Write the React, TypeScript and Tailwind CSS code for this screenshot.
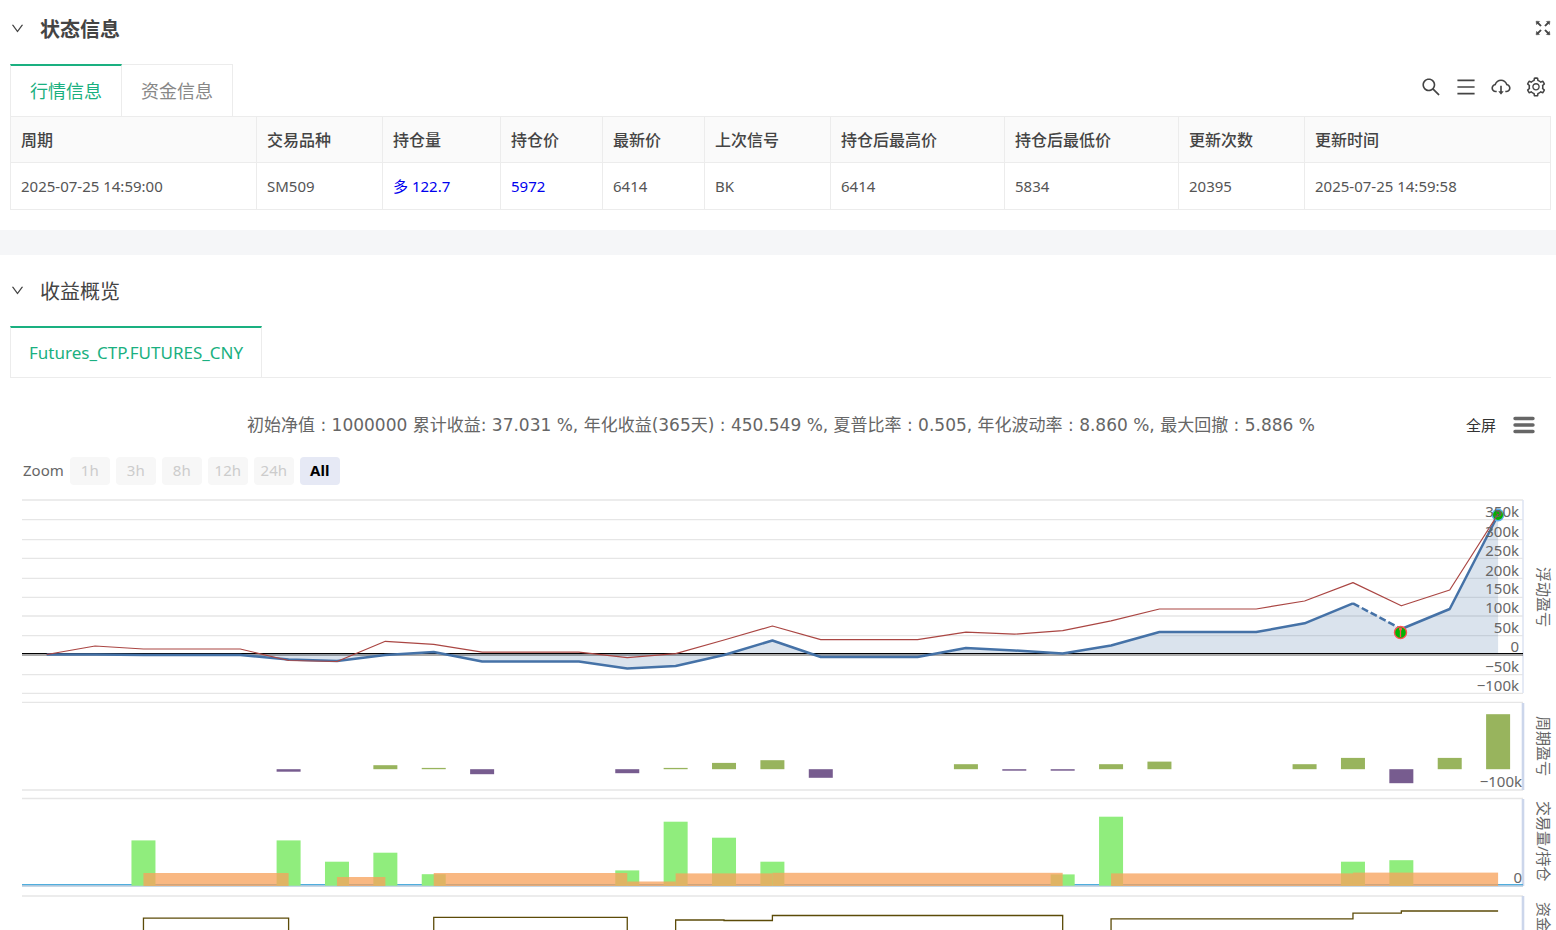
import {
  AiOutlineCloudDownload,
  AiOutlineDown,
  AiOutlineFullscreen,
  AiOutlineMenu,
  AiOutlineSearch,
  AiOutlineSetting,
} from "react-icons/ai";

const columns = [
  { title: "周期", value: "2025-07-25 14:59:00", width: "" },
  { title: "交易品种", value: "SM509", width: "w-[126px]" },
  { title: "持仓量", value: "多 122.7", width: "w-[118px]", highlight: true },
  { title: "持仓价", value: "5972", width: "w-[102px]", highlight: true },
  { title: "最新价", value: "6414", width: "w-[102px]" },
  { title: "上次信号", value: "BK", width: "w-[126px]" },
  { title: "持仓后最高价", value: "6414", width: "w-[174px]" },
  { title: "持仓后最低价", value: "5834", width: "w-[174px]" },
  { title: "更新次数", value: "20395", width: "w-[126px]" },
  { title: "更新时间", value: "2025-07-25 14:59:58", width: "" },
];

const ranges = ["1h", "3h", "8h", "12h", "24h", "All"];

// chart geometry
const LEFT = 22;
const RIGHT = 1523;
const STEP = 48.38;
const px = (i: number) => 46.7 + i * STEP;

const gridLines = [10, 29.6, 49.6, 68.4, 88.4, 107.4, 126, 145.6, 184.6, 203.4];
const profitLabels = [
  { text: "350k", y: 27 },
  { text: "300k", y: 47 },
  { text: "250k", y: 66 },
  { text: "200k", y: 86 },
  { text: "150k", y: 104 },
  { text: "100k", y: 123 },
  { text: "50k", y: 143 },
  { text: "0", y: 162 },
  { text: "−50k", y: 182 },
  { text: "−100k", y: 201 },
];

const blue = [
  164.5, 164.5, 165, 165, 165, 169.5, 171, 165, 162, 171.5, 171.5, 171.5, 178.5, 176, 165, 150.5,
  167, 167, 167, 158, 160.5, 163.5, 155.5, 142, 142, 142, 133.3, 113.3, 139, 119, 25,
];
const red = [
  164.5, 156, 159, 159, 159, 170.5, 171.5, 151.3, 154.3, 162.2, 162.2, 162.2, 167.6, 163.6, 150,
  136, 149.6, 149.6, 149.6, 142.2, 144.2, 140.6, 130.8, 119, 119, 119, 111, 92.6, 115.8, 100, 24,
];

const toPath = (values: number[], from = 0) =>
  values.map((v, i) => `${i === 0 ? "M" : "L"}${px(i + from)} ${v}`).join(" ");

// [index, height], negative values hang below the zero line
const periodBars = [
  [5, -2.5], [7, 4], [8, 1.3], [9, -5], [12, -4], [13, 1.3], [14, 6.3], [15, 9], [16, -8.6],
  [19, 5], [20, -1.5], [21, -1.5], [22, 5], [23, 7.6], [26, 5], [27, 11.3], [28, -14],
  [29, 11.3], [30, 55],
];

const volumeBars = [
  [2, 45.3], [5, 45.3], [6, 24], [7, 33], [8, 11.5], [12, 15.3], [13, 64], [14, 48], [15, 24],
  [21, 11.3], [22, 69], [27, 24], [28, 25.5],
];

// [from, to, height]
const holdings = [
  [2, 5, 13], [6, 7, 9], [8, 12, 13], [12, 13, 4.5], [13, 15, 12.6], [15, 21, 13.2],
  [22, 27, 12.6], [27, 30, 13.4],
];

const funds = [
  `M${px(2)} 450V428.2H${px(5)}V450`,
  `M${px(8)} 450V427.4H${px(12)}V450`,
  `M${px(13)} 450V430H${px(14)}V430.5H${px(15)}V425.5H${px(21)}V450`,
  `M${px(22)} 450V428.8H${px(27)}V423.2H${px(28)}V421H${px(30)}`,
];

function SectionTitle({ title, bold }: { title: string; bold?: boolean }) {
  return (
    <div className="flex items-center gap-[15px]">
      <button type="button" aria-label={title} className="pb-1 text-[#444]">
        <AiOutlineDown size={15} />
      </button>
      <h2 className={bold ? "text-xl font-bold" : "text-xl"}>{title}</h2>
    </div>
  );
}

function AxisTitle({ y, children }: { y: number; children: string }) {
  return (
    <text transform={`translate(1538 ${y}) rotate(90)`} fontSize="15" fill="#666">
      {children}
    </text>
  );
}

function ProfitChart() {
  const area = `${toPath(blue)} L${px(30)} 164 L${px(0)} 164 Z`;
  return (
    <svg
      viewBox="0 0 1556 440"
      className="block w-full font-['Noto_Sans','Noto_Sans_CJK_SC',sans-serif]"
      role="img"
      aria-label="收益概览"
    >
      {/* floating profit */}
      {gridLines.map((y) => (
        <line key={y} x1={LEFT} x2={RIGHT} y1={y} y2={y} stroke="#e6e6e6" strokeWidth="1.4" />
      ))}
      <line x1={RIGHT} x2={RIGHT} y1="10" y2="203" stroke="#dde3f2" strokeWidth="1.5" />
      <path d={area} fill="#4572a7" fillOpacity="0.2" />
      <rect x={LEFT} y="163" width={RIGHT - LEFT} height="1" fill="#000" />
      <rect x={LEFT} y="164" width={RIGHT - LEFT} height="2" fill="#000" fillOpacity="0.33" />
      <g fill="none" stroke="#4572a7" strokeWidth="2.5" strokeLinejoin="round">
        <path d={toPath(blue.slice(0, 28))} />
        <path d={toPath(blue.slice(27, 29), 27)} strokeDasharray="7 3" />
        <path d={toPath(blue.slice(28), 28)} />
      </g>
      <circle cx="1400.5" cy="142.5" r="6" fill="#00b400" stroke="#ff5050" strokeWidth="1.4" />
      <path d="M1400.5 139v8" stroke="#ff5050" strokeWidth="1.3" />
      <circle cx="1400.5" cy="139" r="1.6" fill="#ff5050" />
      <circle cx="1498" cy="25" r="5.7" fill="#00b400" stroke="#5fb0ea" strokeWidth="1.4" />
      <circle cx="1498" cy="23" r="1.8" fill="none" stroke="#5a6a30" strokeWidth="1" />
      <path d={toPath(red)} fill="none" stroke="#aa4643" strokeWidth="1.2" strokeLinejoin="round" />
      <g fontSize="15" fill="#666" textAnchor="end">
        {profitLabels.map((l) => (
          <text key={l.text} x="1519" y={l.y}>
            {l.text}
          </text>
        ))}
      </g>
      <AxisTitle y={77}>浮动盈亏</AxisTitle>

      {/* profit per period */}
      <path d={`M${LEFT} 212.4H${RIGHT}M${LEFT} 300H${RIGHT}`} stroke="#e6e6e6" strokeWidth="1.4" />
      <line x1={RIGHT} x2={RIGHT} y1="213" y2="300" stroke="#ccd6eb" strokeWidth="2.6" />
      {periodBars.map(([i, h]) => (
        <rect
          key={i}
          x={px(i) - 12}
          y={h > 0 ? 279.2 - h : 279.2}
          width="24"
          height={Math.abs(h)}
          fill={h > 0 ? "#98b45d" : "#775c8f"}
        />
      ))}
      <text x="1522" y="297" fontSize="15" fill="#666" textAnchor="end">
        −100k
      </text>
      <AxisTitle y={226}>周期盈亏</AxisTitle>

      {/* volume and holdings */}
      <line x1={LEFT} x2={RIGHT} y1="308.5" y2="308.5" stroke="#e6e6e6" strokeWidth="1.4" />
      <line x1={RIGHT} x2={RIGHT} y1="309" y2="396" stroke="#ccd6eb" strokeWidth="2.6" />
      <rect x={LEFT} y="394" width={RIGHT - LEFT} height="1.2" fill="#4faede" />
      <rect x={LEFT} y="395.2" width={RIGHT - LEFT} height="1.4" fill="#a3bfd6" />
      {volumeBars.map(([i, h]) => (
        <rect key={i} x={px(i) - 12} y={395.7 - h} width="24" height={h} fill="#90ed7d" />
      ))}
      {holdings.map(([from, to, h]) => (
        <rect
          key={from}
          x={px(from)}
          y={396 - h}
          width={(to - from) * STEP}
          height={h}
          fill="#f7a35c"
          fillOpacity="0.77"
        />
      ))}
      <text x="1522" y="393" fontSize="15" fill="#666" textAnchor="end">
        0
      </text>
      <AxisTitle y={311}>交易量/持仓</AxisTitle>

      {/* funds */}
      <line x1={LEFT} x2={RIGHT} y1="406" y2="406" stroke="#e6e6e6" strokeWidth="1.4" />
      <line x1={RIGHT} x2={RIGHT} y1="406" y2="440" stroke="#ccd6eb" strokeWidth="2.6" />
      {funds.map((d) => (
        <path key={d} d={d} fill="none" stroke="#5c4b08" strokeWidth="1.3" />
      ))}
      <AxisTitle y={412}>资金</AxisTitle>
    </svg>
  );
}

export default function App() {
  return (
    <div className="bg-[#f5f6f8] font-['Noto_Sans','Noto_Sans_CJK_SC',sans-serif] text-[#444]">
      <section className="bg-white pb-5">
        <header className="flex h-16 items-start justify-between pl-2.5 pr-[3px] pt-4">
          <SectionTitle title="状态信息" bold />
          <button type="button" aria-label="全屏" className="pt-0.5">
            <AiOutlineFullscreen size={20} strokeWidth={24} />
          </button>
        </header>

        <div className="flex items-center justify-between pl-2.5 pr-[9px]">
          <div role="tablist" className="flex h-[52px] text-lg">
            <button
              type="button"
              role="tab"
              aria-selected="true"
              className="w-28 border-x border-t-2 border-x-[#ececec] border-t-[#1ab080] text-[#1ab080]"
            >
              行情信息
            </button>
            <button
              type="button"
              role="tab"
              aria-selected="false"
              className="w-[111px] border-r border-t border-[#ececec] text-[#888]"
            >
              资金信息
            </button>
          </div>
          <div className="flex gap-[13px] pb-1.5">
            <button type="button" aria-label="搜索">
              <AiOutlineSearch size={22} />
            </button>
            <button type="button" aria-label="列表">
              <AiOutlineMenu size={22} />
            </button>
            <button type="button" aria-label="下载">
              <AiOutlineCloudDownload size={22} />
            </button>
            <button type="button" aria-label="设置">
              <AiOutlineSetting size={22} />
            </button>
          </div>
        </div>

        <div className="pl-2.5 pr-[5px]">
          <table className="w-full table-fixed border-collapse text-left">
            <thead>
              <tr className="h-[46px] bg-[#fafafa]">
                {columns.map((c) => (
                  <th
                    key={c.title}
                    scope="col"
                    className={`${c.width} border border-[#ececec] px-2.5 text-base font-medium`}
                  >
                    {c.title}
                  </th>
                ))}
              </tr>
            </thead>
            <tbody>
              <tr className="h-[47px]">
                {columns.map((c) => (
                  <td
                    key={c.title}
                    className={`border border-[#ececec] px-2.5 text-[15px] ${c.highlight ? "text-[#0000ee]" : "text-[#555]"}`}
                  >
                    {c.value}
                  </td>
                ))}
              </tr>
            </tbody>
          </table>
        </div>
      </section>

      <section className="mt-[25px] bg-white">
        <header className="flex h-[71px] items-start pl-2.5 pt-[23px]">
          <SectionTitle title="收益概览" />
        </header>

        <div role="tablist" className="ml-2.5 mr-[5px] flex h-[52px] border-b border-[#ececec]">
          <button
            type="button"
            role="tab"
            aria-selected="true"
            className="border-x border-t-2 border-x-[#ececec] border-t-[#1ab080] px-[18px] text-[17px] text-[#1ab080]"
          >
            Futures_CTP.FUTURES_CNY
          </button>
        </div>

        <div className="flex items-center pl-[96px] pr-[21px] pt-8">
          <p className="flex-1 text-center font-['DejaVu_Sans','Noto_Sans_CJK_SC',sans-serif] text-[17px] leading-[30px] text-[#666]">
            初始净值 : 1000000 累计收益: 37.031 %, 年化收益(365天) : 450.549 %, 夏普比率 : 0.505,
            年化波动率 : 8.860 %, 最大回撤 : 5.886 %
          </p>
          <div className="flex items-center gap-[17px]">
            <button type="button" className="text-[15px] text-[#333]">
              全屏
            </button>
            <button type="button" aria-label="菜单">
              <svg width="22" height="20" viewBox="0 0 22 20" fill="none">
                <path
                  d="M2 3.5h18M2 10h18M2 16.5h18"
                  stroke="#666"
                  strokeWidth="3.4"
                  strokeLinecap="round"
                />
              </svg>
            </button>
          </div>
        </div>

        <div className="flex h-[50px] items-center gap-1.5 pl-[23px] pt-[11px] text-[15px]">
          <span className="text-[#666]">Zoom</span>
          {ranges.map((r) => (
            <button
              key={r}
              type="button"
              disabled={r !== "All"}
              className="h-7 w-10 rounded-sm bg-[#e6e9f5] font-bold text-black disabled:bg-[#f7f7f7] disabled:font-normal disabled:text-[#ccc]"
            >
              {r}
            </button>
          ))}
        </div>

        <ProfitChart />
      </section>
    </div>
  );
}
